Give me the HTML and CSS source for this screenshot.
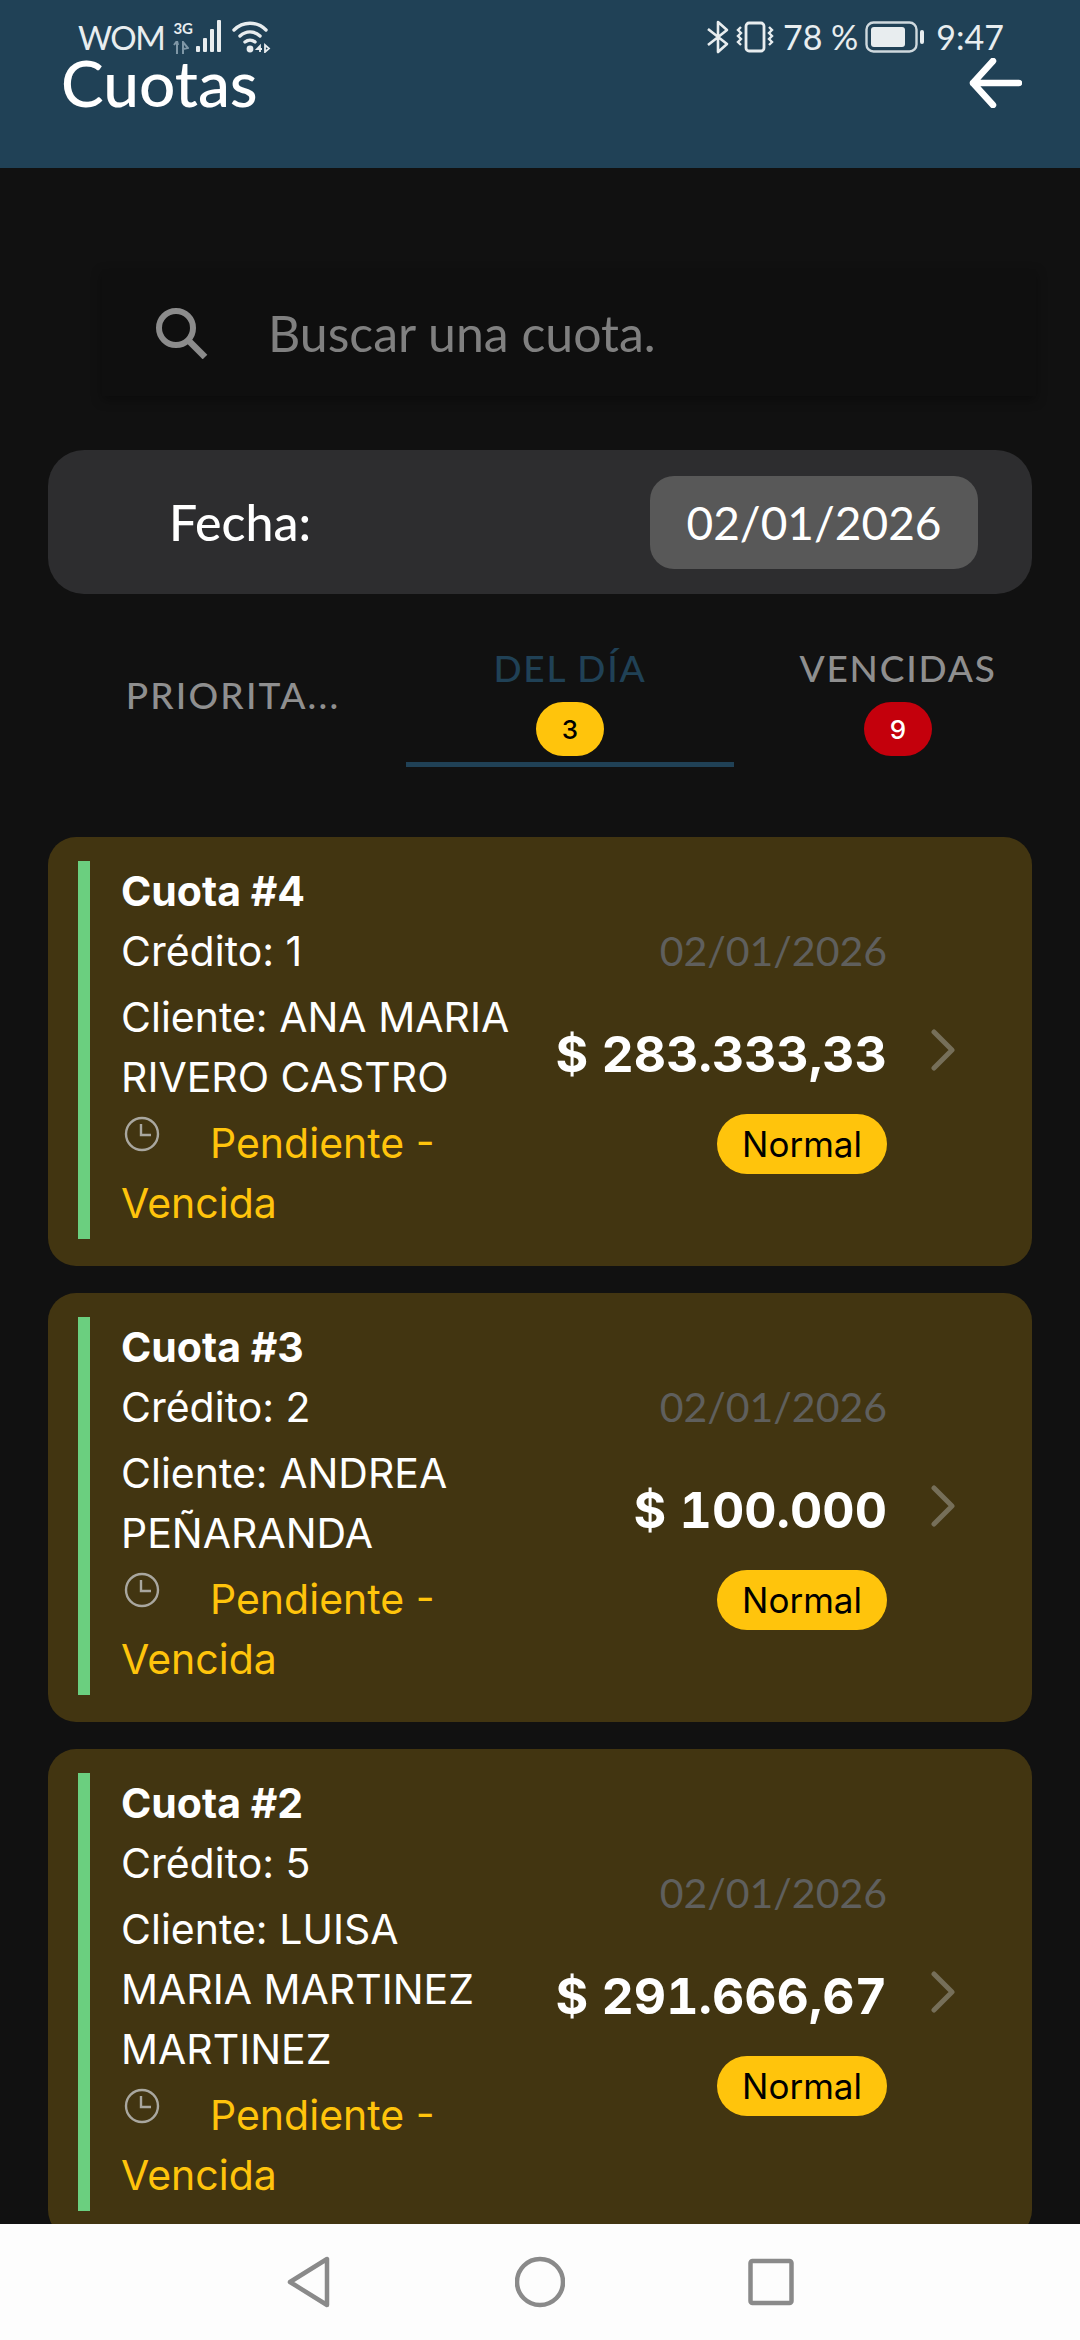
FILE: index.html
```html
<!DOCTYPE html>
<html lang="es">
<head>
<meta charset="utf-8">
<title>Cuotas</title>
<link rel="stylesheet" href="styles.css">
</head>
<body>
<div class="app">
  <header class="header">
    <div class="status">
      <div class="status-left">
        <span class="carrier">WOM</span>
        <span class="net"><span class="net-g">3G</span>
          <svg class="net-arrows" width="16" height="13" viewBox="0 0 16 13"><path d="M4 0v13M1 4l3-4 1 4M10 13V1l5 6-5 1z" fill="none" stroke="#7f97a6" stroke-width="2"/></svg>
        </span>
        <svg class="bars" width="27" height="34" viewBox="0 0 27 34"><g fill="#e8edef"><rect x="0" y="26" width="4" height="6" rx="1"/><rect x="7" y="18" width="4" height="14" rx="1"/><rect x="14" y="9" width="4" height="23" rx="1"/><rect x="21" y="0" width="4" height="32" rx="1"/></g></svg>
        <svg class="wifi" width="40" height="32" viewBox="0 0 40 32"><g fill="none" stroke="#e8edef" stroke-width="3.4" stroke-linecap="round"><path d="M2 9C11 0 25 0 34 9"/><path d="M8 15c6-5.500 14-5.500 20 0"/><path d="M13 21c3-2.500 7-2.500 10 0"/></g><circle cx="18" cy="28" r="3.400" fill="#e8edef"/><path d="M28 31v-6l-3 3h5M33 24v7l4-3.500z" fill="none" stroke="#e8edef" stroke-width="1.800"/></svg>
      </div>
      <div class="status-right">
        <svg class="bt" width="23" height="34" viewBox="0 0 23 34"><path d="M2 9l19 15-9 8V2l9 8L2 25" fill="none" stroke="#e8edef" stroke-width="2.600" stroke-linejoin="round"/></svg>
        <svg class="vib" width="38" height="32" viewBox="0 0 38 32"><rect x="10" y="2" width="18" height="28" rx="3" fill="none" stroke="#e8edef" stroke-width="2.800"/><path d="M5 6l-3 3 3 3-3 3 3 3-3 3 3 3M33 6l3 3-3 3 3 3-3 3 3 3-3 3" fill="none" stroke="#e8edef" stroke-width="2.400"/></svg>
        <span class="pct">78 %</span>
        <svg class="batt" width="60" height="32" viewBox="0 0 60 32"><rect x="1.500" y="1.500" width="50" height="29" rx="7" fill="none" stroke="#cfd9de" stroke-width="2.400"/><rect x="6" y="6" width="34" height="20" rx="3" fill="#e8edef"/><rect x="55" y="9" width="4" height="14" rx="2" fill="#e8edef"/></svg>
        <span class="clock">9:47</span>
      </div>
    </div>
    <div class="titlebar">
      <h1 class="title">Cuotas</h1>
      <svg class="back" width="54" height="50" viewBox="0 0 54 50"><path d="M25 3L5 25l20 22M5 25h46" fill="none" stroke="#fff" stroke-width="6.500" stroke-linecap="round" stroke-linejoin="round"/></svg>
    </div>
  </header>

  <main class="main">
    <div class="search">
      <svg class="search-icon" width="54" height="52" viewBox="0 0 54 52"><circle cx="21" cy="21" r="17" fill="none" stroke="#8c8c8c" stroke-width="6"/><path d="M33 33l17 17" stroke="#8c8c8c" stroke-width="6.500"/></svg>
      <span class="placeholder">Buscar una cuota.</span>
    </div>

    <div class="date-card">
      <span class="date-label">Fecha:</span>
      <span class="date-value">02/01/2026</span>
    </div>

    <nav class="tabs">
      <div class="tab"><span class="tab-label tab-trunc">PRIORITA...</span></div>
      <div class="tab tab-active"><span class="tab-label">DEL DÍA</span><span class="count count-yellow">3</span></div>
      <div class="tab"><span class="tab-label">VENCIDAS</span><span class="count count-red">9</span></div>
    </nav>

    <section class="cards">
      <article class="card">
        <div class="bar"></div>
        <div class="info">
          <div class="c-title">Cuota #4</div>
          <div class="c-line">Crédito: 1</div>
          <div class="c-line c-gap">Cliente: ANA MARIA RIVERO CASTRO</div>
          <div class="c-state c-gap"><svg class="clk" width="36" height="36" viewBox="0 0 36 36"><circle cx="18" cy="18" r="16" fill="none" stroke="#a9a79f" stroke-width="2.400"/><path d="M17 8v11h10" fill="none" stroke="#a9a79f" stroke-width="2.400"/></svg>Pendiente - Vencida</div>
        </div>
        <div class="side">
          <div class="c-date">02/01/2026</div>
          <div class="c-amount">$ 283.333,33</div>
          <div class="c-pill">Normal</div>
        </div>
        <svg class="chev" width="26" height="42" viewBox="0 0 26 42"><path d="M4 3l18 18L4 39" fill="none" stroke="#766f59" stroke-width="5" stroke-linecap="round" stroke-linejoin="round"/></svg>
      </article>

      <article class="card">
        <div class="bar"></div>
        <div class="info">
          <div class="c-title">Cuota #3</div>
          <div class="c-line">Crédito: 2</div>
          <div class="c-line c-gap">Cliente: ANDREA PEÑARANDA</div>
          <div class="c-state c-gap"><svg class="clk" width="36" height="36" viewBox="0 0 36 36"><circle cx="18" cy="18" r="16" fill="none" stroke="#a9a79f" stroke-width="2.400"/><path d="M17 8v11h10" fill="none" stroke="#a9a79f" stroke-width="2.400"/></svg>Pendiente - Vencida</div>
        </div>
        <div class="side">
          <div class="c-date">02/01/2026</div>
          <div class="c-amount">$ 100.000</div>
          <div class="c-pill">Normal</div>
        </div>
        <svg class="chev" width="26" height="42" viewBox="0 0 26 42"><path d="M4 3l18 18L4 39" fill="none" stroke="#766f59" stroke-width="5" stroke-linecap="round" stroke-linejoin="round"/></svg>
      </article>

      <article class="card">
        <div class="bar"></div>
        <div class="info">
          <div class="c-title">Cuota #2</div>
          <div class="c-line">Crédito: 5</div>
          <div class="c-line c-gap">Cliente: LUISA MARIA MARTINEZ MARTINEZ</div>
          <div class="c-state c-gap"><svg class="clk" width="36" height="36" viewBox="0 0 36 36"><circle cx="18" cy="18" r="16" fill="none" stroke="#a9a79f" stroke-width="2.400"/><path d="M17 8v11h10" fill="none" stroke="#a9a79f" stroke-width="2.400"/></svg>Pendiente - Vencida</div>
        </div>
        <div class="side">
          <div class="c-date">02/01/2026</div>
          <div class="c-amount">$ 291.666,67</div>
          <div class="c-pill">Normal</div>
        </div>
        <svg class="chev" width="26" height="42" viewBox="0 0 26 42"><path d="M4 3l18 18L4 39" fill="none" stroke="#766f59" stroke-width="5" stroke-linecap="round" stroke-linejoin="round"/></svg>
      </article>
    </section>
  </main>

  <footer class="navbar">
    <svg width="46" height="52" viewBox="0 0 46 52"><path d="M41 3v46L4 26z" fill="none" stroke="#8a8a8a" stroke-width="4.500" stroke-linejoin="round"/></svg>
    <svg width="50" height="52" viewBox="0 0 50 52"><circle cx="25" cy="26" r="23" fill="none" stroke="#8a8a8a" stroke-width="4.500"/></svg>
    <svg width="46" height="48" viewBox="0 0 46 48"><rect x="2.500" y="3" width="41" height="42" rx="2" fill="none" stroke="#8a8a8a" stroke-width="4.500"/></svg>
  </footer>
</div>
</body>
</html>
```

FILE: styles.css
```css
* { box-sizing: border-box; }
html, body { margin: 0; padding: 0; }
body { background: #111; font-family: Inter, sans-serif; color: #fff; }

.app { width: 1080px; height: 2340px; display: flex; flex-direction: column; overflow: hidden; }

.header { height: 168px; flex: none; background: #204156; padding: 18px 58px 0 61px; display: flex; flex-direction: column; }
.status { height: 38px; display: flex; justify-content: space-between; align-items: center; font-family: Lato, sans-serif; font-size: 34px; color: #e8edef; margin: 0 18px 0 17px; }
.status-left, .status-right { display: flex; align-items: center; }
.carrier { font-size: 33px; font-weight: 400; line-height: 38px; letter-spacing: -1.500px; }
.net { display: flex; flex-direction: column; align-items: flex-start; margin: 0 7px 0 9px; width: 16px; }
.net-g { font-size: 15px; font-weight: 700; line-height: 14px; margin-bottom: 6px; }
.net-arrows { display: block; }
.bars { margin-right: 9px; }
.bt { margin-right: 7px; }
.vib { margin-right: 9px; }
.pct { font-weight: 400; line-height: 38px; margin-right: 7px; }
.batt { margin-right: 11px; }
.clock { font-weight: 400; line-height: 38px; }
.titlebar { display: flex; justify-content: space-between; align-items: center; height: 54px; }
.title { margin: 0; font-family: Lato, sans-serif; font-size: 64px; font-weight: 500; line-height: 54px; }

.main { flex: 1; min-height: 0; overflow: hidden; padding: 0 48px; }

.search { margin: 101px 0 0 54px; width: 934px; height: 127px; background: #0f0f0f; box-shadow: 0 4px 10px rgba(0,0,0,.35); display: flex; align-items: center; padding-left: 53px; }
.search-icon { margin-right: 59px; }
.placeholder { font-family: Lato, sans-serif; font-size: 50px; color: #808080; }

.date-card { margin-top: 54px; height: 144px; background: #2d2d2f; border-radius: 36px; display: flex; align-items: center; justify-content: space-between; padding: 0 54px 0 121px; }
.date-label { font-family: Lato, sans-serif; font-size: 50px; font-weight: 500; }
.date-value { width: 328px; height: 93px; background: #585858; border-radius: 24px; display: flex; align-items: center; justify-content: center; font-family: Lato, sans-serif; font-size: 46px; }

.tabs { margin: 46px 0 0 30px; width: 984px; height: 127px; display: grid; grid-template-columns: repeat(3, 328px); font-family: Lato, sans-serif; }
.tab { display: flex; flex-direction: column; align-items: center; color: #8f8f8f; padding-top: 6px; }
.tab-active { color: #204156; border-bottom: 5px solid #204156; }
.tab-label { font-size: 37px; font-weight: 500; letter-spacing: 1.800px; line-height: 44px; }
.tab-trunc { margin: 27px 18px 0 0; letter-spacing: 2.200px; }
.count { width: 68px; height: 54px; border-radius: 27px; display: flex; align-items: center; justify-content: center; font-family: Inter, sans-serif; font-size: 26px; font-weight: 500; margin-top: 12px; }
.count-yellow { background: #ffc40c; color: #000; }
.count-red { background: #c4000c; color: #fff; }

.cards { margin-top: 70px; display: flex; flex-direction: column; gap: 27px; }
.card { background: #423511; border-radius: 28px; padding: 24px 0 27px 30px; display: flex; align-items: stretch; flex: none; }
.bar { width: 12px; flex: none; background: #6bcf7f; }
.info { width: 398px; margin-left: 31px; padding-bottom: 6px; flex: none; }
.c-title { font-size: 41px; font-weight: 700; line-height: 60px; }
.c-line { font-size: 41px; line-height: 60px; }
.c-gap { margin-top: 6px; }
.c-state { font-size: 41px; line-height: 60px; color: #ffc40c; }
.clk { vertical-align: 6px; margin: 0 50px 0 3px; }
.side { flex: 1; display: flex; flex-direction: column; align-items: flex-end; justify-content: center; }
.c-date { font-family: Lato, sans-serif; font-size: 41px; color: #5f5f5d; line-height: 50px; }
.c-amount { font-size: 50px; font-weight: 700; font-variant-numeric: tabular-nums; line-height: 70px; margin-top: 43px; }
.c-pill { height: 60px; width: 170px; margin-top: 25px; border-radius: 30px; background: #ffc40c; color: #000; font-size: 35px; display: flex; align-items: center; justify-content: center; }
.chev { flex: none; align-self: center; margin: 0 76px 0 43px; }

.navbar { height: 116px; flex: none; background: #fdfdfd; display: flex; align-items: center; justify-content: center; gap: 183px; position: relative; z-index: 1; }
```
